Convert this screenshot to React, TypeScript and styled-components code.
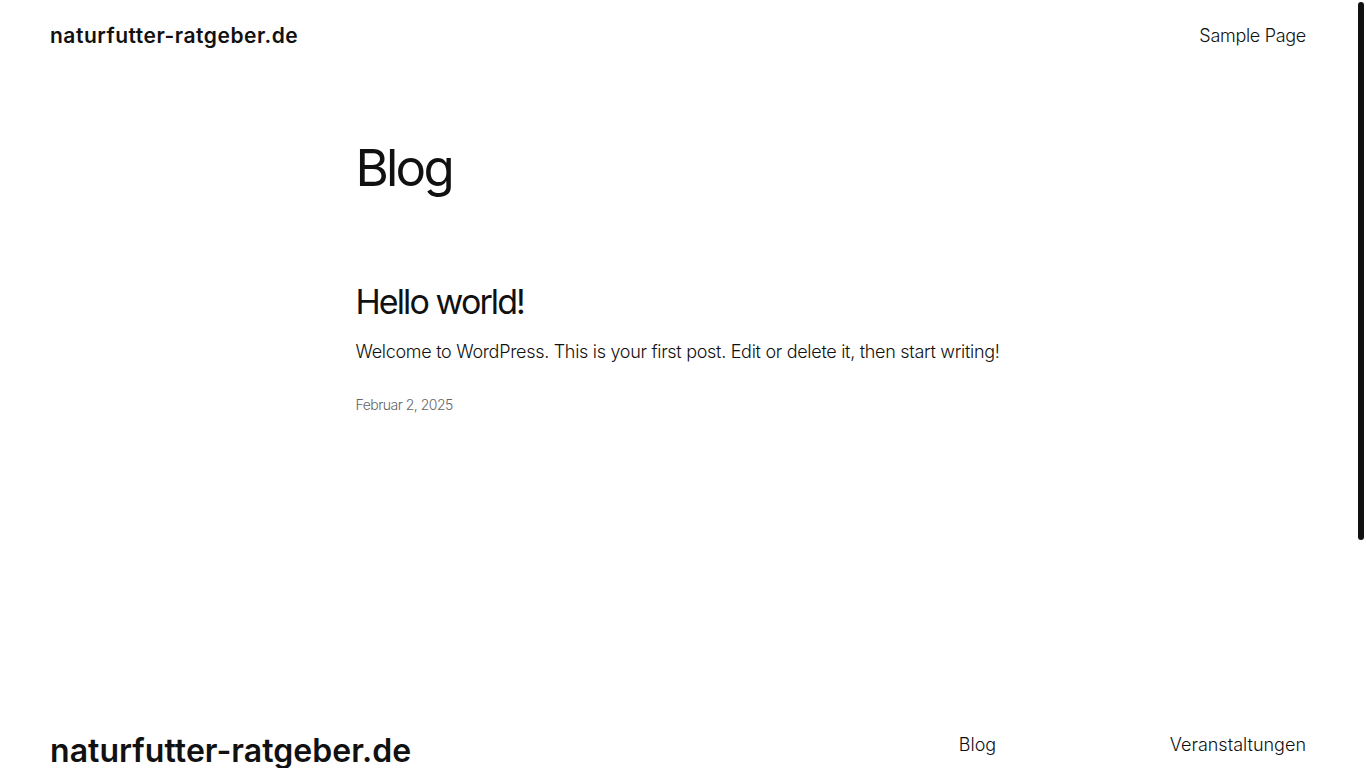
import * as React from 'react'
import styled, { createGlobalStyle } from 'styled-components'

const GlobalStyle = createGlobalStyle`
  html {
    background: #fff;
  }
  body {
    margin: 0;
    padding-right: 10px;
    background: #fff;
    color: #111;
    font-family: Inter, 'Noto Sans', sans-serif;
    -webkit-font-smoothing: antialiased;
  }
  a {
    color: inherit;
    text-decoration: none;
  }
`

// drawn scrollbar thumb, the headless browser hides the real one
const ScrollThumb = styled.div`
  position: fixed;
  top: 2px;
  right: 2px;
  width: 6px;
  height: 538px;
  border-radius: 3px;
  background: #111;
`

const Page = styled.div`
  min-height: 100vh;
  display: flex;
  flex-direction: column;
`

const Header = styled.header`
  display: flex;
  align-items: center;
  justify-content: space-between;
  padding: 1px 50px 0;
  height: 70px;
`

const SiteTitle = styled.a<{ $big?: boolean }>`
  font-weight: 600;
  font-size: ${(p) => (p.$big ? '32px' : '21px')};
  letter-spacing: ${(p) => (p.$big ? '0.05px' : '0.52px')};
  line-height: 1.2;
  color: #111;
`

const NavLink = styled.a<{ $wide?: boolean }>`
  font-size: 18px;
  font-weight: 300;
  letter-spacing: ${(p) => (p.$wide ? '0px' : '-0.3px')};
  line-height: 1.4;
  color: #111;
`

const Main = styled.main`
  width: 645px;
  margin: 0 auto;
  padding: 68px 0 0;
  flex: 1;
`

const PageTitle = styled.h1`
  margin: 0;
  font-size: 51px;
  font-weight: 400;
  letter-spacing: -2.8px;
  line-height: 1.125;
`

const PostList = styled.ul`
  list-style: none;
  margin: 86px 0 0;
  padding: 0;
`

const Post = styled.li`
  display: flex;
  flex-direction: column;
`

const PostTitle = styled.h2`
  margin: 0;
  font-size: 34px;
  font-weight: 400;
  letter-spacing: -1.9px;
  line-height: 1.2;
`

const Excerpt = styled.p`
  margin: 16px 0 0;
  font-size: 18px;
  font-weight: 300;
  letter-spacing: -0.3px;
  line-height: 1.4;
`

const PostDate = styled.time`
  margin-top: 32px;
  font-size: 14px;
  font-weight: 300;
  letter-spacing: -0.5px;
  color: #666;
`

const Footer = styled.footer`
  margin-top: 319px;
  padding: 0 50px 60px;
`

const FooterTop = styled.div`
  display: flex;
  justify-content: space-between;
  align-items: flex-start;
`

const FooterNav = styled.nav`
  display: grid;
  grid-template-columns: 211px auto;
`

const FooterColumn = styled.div`
  display: flex;
  flex-direction: column;
  gap: 14px;
  align-items: flex-start;
`

const Divider = styled.hr`
  border: 0;
  border-top: 1px solid #ddd;
  margin: 140px 0 24px;
`

const Credit = styled.p`
  margin: 0;
  font-size: 14px;
  font-weight: 300;
  color: #111;
`

export default function App() {
  return (
    <Page>
      <GlobalStyle />
      <ScrollThumb />
      <Header>
        <SiteTitle href="#">naturfutter-ratgeber.de</SiteTitle>
        <NavLink href="#">Sample Page</NavLink>
      </Header>
      <Main>
        <PageTitle>Blog</PageTitle>
        <PostList>
          <Post>
            <PostTitle>Hello world!</PostTitle>
            <Excerpt>
              Welcome to WordPress. This is your first post. Edit or delete it,
              then start writing!
            </Excerpt>
            <PostDate>Februar 2, 2025</PostDate>
          </Post>
        </PostList>
      </Main>
      <Footer>
        <FooterTop>
          <SiteTitle $big href="#">
            naturfutter-ratgeber.de
          </SiteTitle>
          <FooterNav>
            <FooterColumn>
              <NavLink $wide href="#">Blog</NavLink>
              <NavLink $wide href="#">Über uns</NavLink>
              <NavLink $wide href="#">FAQs</NavLink>
            </FooterColumn>
            <FooterColumn>
              <NavLink $wide href="#">Veranstaltungen</NavLink>
              <NavLink $wide href="#">Shop</NavLink>
              <NavLink $wide href="#">Kontakt</NavLink>
            </FooterColumn>
          </FooterNav>
        </FooterTop>
        <Divider />
        <Credit>Designed with WordPress</Credit>
      </Footer>
    </Page>
  )
}
